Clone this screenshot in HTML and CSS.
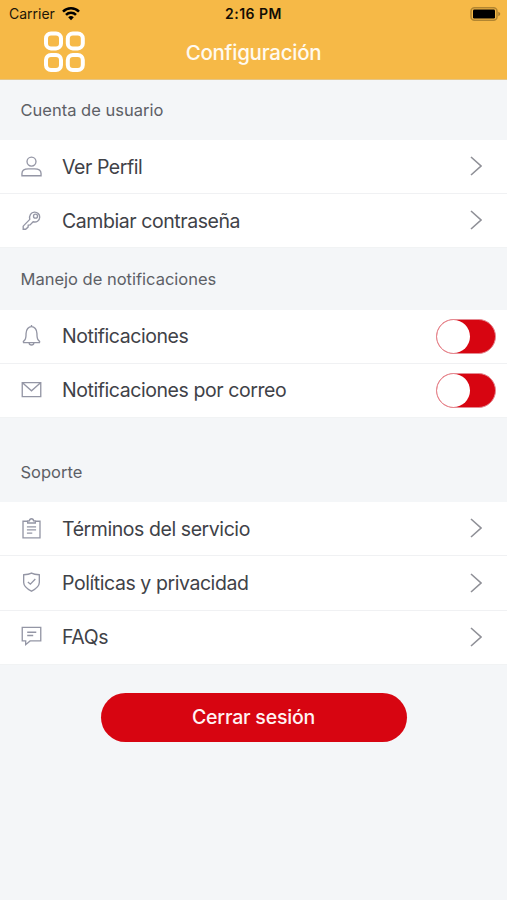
FILE: index.html
```
<!DOCTYPE html>
<html lang="es">
<head>
    <meta charset="UTF-8">
    <meta name="viewport" content="width=device-width, initial-scale=1.0">
    <title>Configuración</title>
    <link rel="stylesheet" href="styles.css">
</head>
<body>
    <header class="header">
        <div class="status-bar">
            <div class="carrier">
                <span>Carrier</span>
                <svg width="18" height="14" viewBox="0 0 18 14" fill="none" stroke="#000" stroke-width="2.5">
                    <path d="M1 4.600a11.300 11.300 0 0 1 16 0M4 7.800a7 7 0 0 1 10 0"/>
                    <path d="M9 13.200L6.200 10.300a4 4 0 0 1 5.600 0z" fill="#000" stroke="none"/>
                </svg>
            </div>
            <span class="time">2:16 PM</span>
            <svg class="battery" width="31" height="14" viewBox="0 0 31 14">
                <rect x="1" y=".8" width="26" height="12.4" rx="3.5" fill="none" stroke="#b18531" stroke-width="1.5"/>
                <rect x="3" y="2.5" width="22" height="9" rx="1.2" fill="#000"/>
                <path d="M28.3 4.8v4.4c2.6-1 2.6-3.4 0-4.4z" fill="#a57c30"/>
            </svg>
        </div>
        <div class="nav-bar">
            <svg class="menu-icon" width="42" height="42" viewBox="0 0 42 42" fill="none" stroke="#fff" stroke-width="4">
                <rect x="3" y="2.4" width="15" height="15" rx="5"/>
                <rect x="24.8" y="2.4" width="15" height="15" rx="5"/>
                <rect x="3" y="24" width="15" height="15" rx="5"/>
                <rect x="24.8" y="24" width="15" height="15" rx="5"/>
            </svg>
            <h1>Configuración</h1>
        </div>
    </header>

    <main>
        <h2 class="section-title">Cuenta de usuario</h2>
        <ul class="list">
            <li class="row">
                <svg class="icon" viewBox="0 0 22 22">
                    <circle cx="11" cy="5.300" r="4.700"/>
                    <path d="M1 20.200v-2.300c0-3.300 3.100-4.900 6.700-4.900h6.600c3.600 0 6.700 1.600 6.700 4.900v2.300z"/>
                </svg>
                <span class="label">Ver Perfil</span>
                <svg class="arrow" viewBox="0 0 12 20"><path d="M1 1l10 9-10 9"/></svg>
            </li>
            <li class="row">
                <svg class="icon" viewBox="0 0 22 22">
                    <path d="M9.200 9.300C8.300 5.300 10.500 1.900 14 1.700c3.300-.1 5.700 2.400 5.600 5.300-.1 3.800-3.500 5.800-6.900 4.800l-3.200 3.300-1.900.2-.2 2.100-2.500 2.200H2.300v-3.200z"/>
                    <circle cx="15.200" cy="5.900" r="2.100"/>
                </svg>
                <span class="label">Cambiar contraseña</span>
                <svg class="arrow" viewBox="0 0 12 20"><path d="M1 1l10 9-10 9"/></svg>
            </li>
        </ul>

        <h2 class="section-title section-title-notif">Manejo de notificaciones</h2>
        <ul class="list">
            <li class="row">
                <svg class="icon" viewBox="0 0 22 22">
                    <path d="M11 -.6v1.600M2.600 18c-.8-1.200.2-2 1.200-2.700 1.400-1 1.500-3 1.500-6.900C5.300 4 8 1.100 11 1.100s5.700 2.900 5.700 7.300c0 3.900.1 5.900 1.500 6.900 1 .7 2 1.500 1.200 2.700zM8.500 18.200c.3 3 4.700 3 5 0"/>
                </svg>
                <span class="label">Notificaciones</span>
                <span class="switch"></span>
            </li>
            <li class="row">
                <svg class="icon" viewBox="0 0 22 22">
                    <path d="M1.300 3.300h19.400v14.600H1.300zM1.500 3.500l9.500 8.300 9.500-8.300"/>
                </svg>
                <span class="label">Notificaciones por correo</span>
                <span class="switch"></span>
            </li>
        </ul>

        <h2 class="section-title section-title-support">Soporte</h2>
        <ul class="list">
            <li class="row">
                <svg class="icon" viewBox="0 0 22 22">
                    <path d="M7 2.900H2.100v17.400h17.800V2.900H15M7 4.700V2.500h1.800c.2-3 4.200-3 4.400 0H15v2.200zM6.200 8.700h9.600M6.200 12h9.600M6.200 15.300h5.600"/>
                </svg>
                <span class="label">Términos del servicio</span>
                <svg class="arrow" viewBox="0 0 12 20"><path d="M1 1l10 9-10 9"/></svg>
            </li>
            <li class="row">
                <svg class="icon" viewBox="0 0 22 22">
                    <path d="M11 .6c2.400 1.200 5.300 1.600 8.200 1.800v8c0 4.600-4.300 7-8.200 9.200-3.900-2.200-8.200-4.600-8.200-9.200v-8C5.700 2.200 8.600 1.800 11 .6zM7.200 9.900l2.600 2.300L15 6.900"/>
                </svg>
                <span class="label">Políticas y privacidad</span>
                <svg class="arrow" viewBox="0 0 12 20"><path d="M1 1l10 9-10 9"/></svg>
            </li>
            <li class="row">
                <svg class="icon" viewBox="0 0 22 22">
                    <path d="M1.300 .9h19.400v14.200H9.500L4.900 19v-3.900H1.300zM6.500 6h9.500M6.500 9.400h6.300"/>
                </svg>
                <span class="label">FAQs</span>
                <svg class="arrow" viewBox="0 0 12 20"><path d="M1 1l10 9-10 9"/></svg>
            </li>
        </ul>

        <button class="logout">Cerrar sesión</button>
    </main>
</body>
</html>
```
FILE: styles.css
```
* {
    box-sizing: border-box;
}

body {
    margin: 0;
    min-height: 100vh;
    background-color: #f4f6f8;
    font-family: Inter, "Liberation Sans", sans-serif;
    color: #3f4248;
}

.header {
    height: 80px;
    background-color: #f6b947;
    border-bottom: 1px solid #e5c586;
}

.status-bar {
    display: grid;
    grid-template-columns: 1fr auto 1fr;
    align-items: center;
    height: 27px;
    padding: 0 6px;
    font-size: 14px;
    color: #1d1608;
}

.carrier {
    display: flex;
    align-items: center;
    gap: 7px;
    padding-left: 3px;
}

.time {
    font-weight: 600;
    letter-spacing: 0.5px;
    color: #120d04;
}

.battery {
    justify-self: end;
}

.nav-bar {
    display: grid;
    grid-template-columns: 1fr auto 1fr;
    align-items: center;
    height: 50px;
}

.menu-icon {
    margin-left: 43px;
}

.nav-bar h1 {
    margin: 0;
    font-size: 20.5px;
    font-weight: 550;
    letter-spacing: -0.25px;
    color: #fffaf0;
}

.section-title {
    display: flex;
    align-items: center;
    height: 60px;
    margin: 0;
    padding-left: 20.5px;
    font-size: 16.5px;
    font-weight: 400;
    color: #5d6066;
}

.section-title-notif {
    height: 61.4px;
}

.section-title-support {
    height: 84.6px;
    padding-top: 24px;
}

.list {
    margin: 0;
    padding: 0;
    list-style: none;
    background-color: #fff;
}

.row {
    display: flex;
    align-items: center;
    height: 54.1px;
    padding: 0 25px 0 21px;
    border-bottom: 1.5px solid #f0f1f3;
}

.row:last-child {
    border-bottom-color: #f1f3f4;
}

.icon {
    width: 21px;
    height: 22px;
    margin-right: 20px;
    overflow: visible;
    fill: none;
    stroke: #9496a5;
    stroke-width: 1.4;
}

.label {
    flex: 1;
    font-size: 19.5px;
    letter-spacing: -0.43px;
}

.arrow {
    width: 12px;
    height: 20px;
    margin-top: -1px;
    fill: none;
    stroke: #8f9097;
    stroke-width: 1.6;
}

.switch {
    width: 60px;
    height: 35px;
    margin-right: -14px;
    border: 1px solid #e58a92;
    border-radius: 18px;
    background-color: #d70511;
}

.switch::before {
    content: "";
    display: block;
    width: 33px;
    height: 33px;
    border-radius: 50%;
    background-color: #fff;
}

.logout {
    display: block;
    width: 306px;
    height: 49px;
    margin: 28px auto 0;
    border: none;
    border-radius: 25px;
    background-color: #d70511;
    color: #fff3f3;
    font-family: inherit;
    font-size: 19.5px;
    font-weight: 550;
    letter-spacing: -0.2px;
}
```
